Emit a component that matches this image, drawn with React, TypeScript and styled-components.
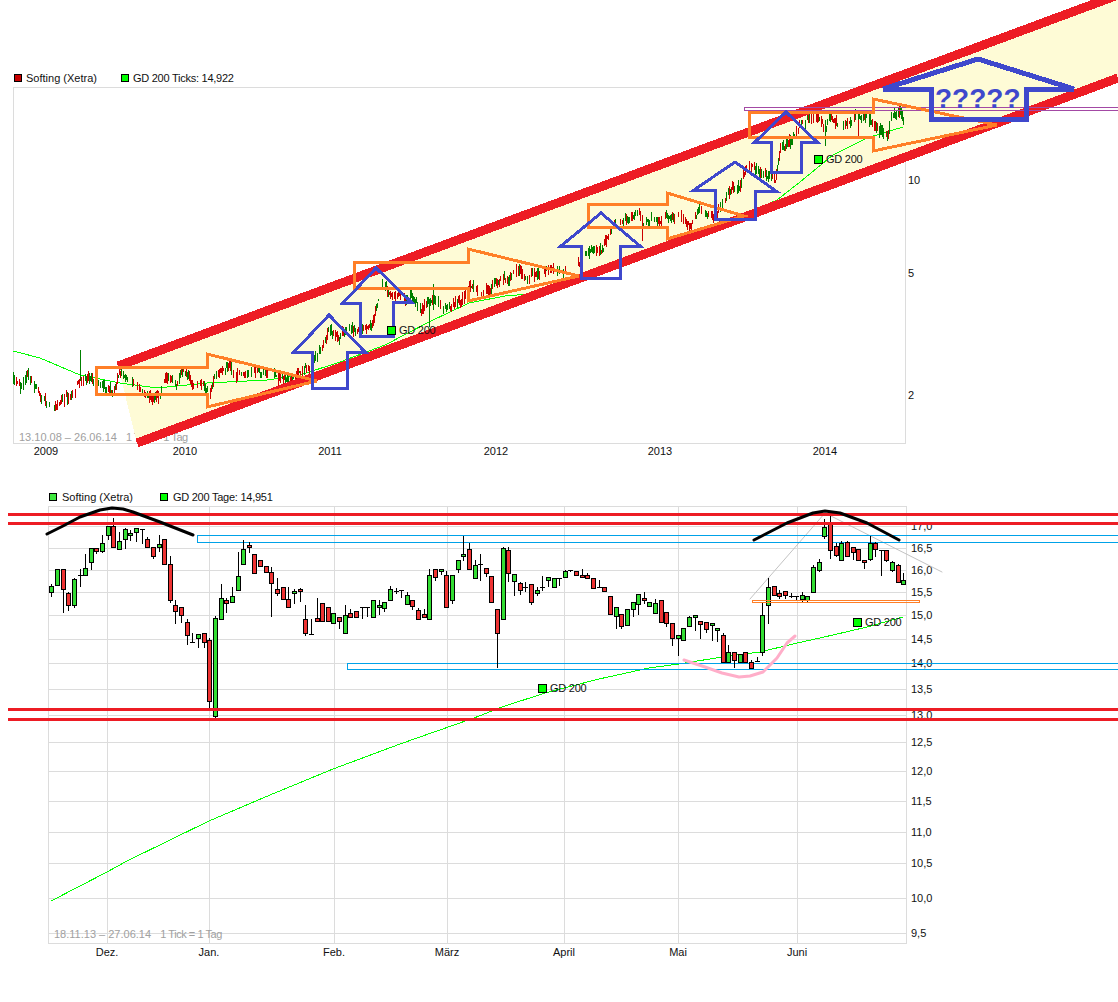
import styled, { createGlobalStyle } from "styled-components";

type Point = [number, number];
// top, bottom, wick top, wick bottom, direction (1 up, -1 down, 0 doji)
type Candle = [number, number, number, number, number];

const GlobalStyle = createGlobalStyle`
  body {
    margin: 0;
    background: #ffffff;
  }
`;

const Page = styled.div`
  width: 1118px;
  height: 1002px;
  padding-top: 71px;
  box-sizing: border-box;
  display: flex;
  flex-direction: column;
  overflow: hidden;
  font-family: "Liberation Sans", Arial, sans-serif;
`;

const Legend = styled.div<{ $inset: number; $top?: number; $gap: number }>`
  height: 14px;
  margin-top: ${(p) => p.$top ?? 0}px;
  padding-left: ${(p) => p.$inset}px;
  display: flex;
  align-items: center;
  gap: ${(p) => p.$gap}px;
  position: relative;
  z-index: 1;
`;

const LegendItem = styled.div<{ $gap: number; $tight?: boolean }>`
  display: flex;
  align-items: center;
  gap: ${(p) => p.$gap}px;
  font-size: 11px;
  color: #111111;
  white-space: nowrap;
  letter-spacing: ${(p) => (p.$tight ? "-0.25px" : "0")};
`;

const Swatch = styled.span<{ $color: string }>`
  width: 8px;
  height: 8px;
  box-sizing: border-box;
  border: 1px solid #000000;
  background: ${(p) => p.$color};
`;

const Plot = styled.svg`
  display: block;
  overflow: visible;
  flex: none;
`;

const GridLine = styled.line`
  stroke: #dcdcdc;
  stroke-width: 1;
  shape-rendering: crispEdges;
`;

const Frame = styled.rect`
  fill: none;
  stroke: #dcdcdc;
  stroke-width: 1;
  shape-rendering: crispEdges;
`;

const AxisLabel = styled.text<{ $center?: boolean }>`
  font-family: "Liberation Sans", Arial, sans-serif;
  font-size: 11px;
  fill: #111111;
  text-anchor: ${(p) => (p.$center ? "middle" : "start")};
`;

const MarkerLabel = styled(AxisLabel)`
  letter-spacing: -0.25px;
`;

const RangeLabel = styled.text`
  font-family: "Liberation Sans", Arial, sans-serif;
  font-size: 11px;
  fill: #a0a0a0;
  white-space: pre;
`;

const RangeTail = styled.tspan`
  letter-spacing: -0.45px;
`;

const MarkerBox = styled.rect`
  fill: #00ff00;
  stroke: #000000;
  stroke-width: 1;
  shape-rendering: crispEdges;
`;

const Channel = styled.polygon`
  fill: #fefbd6;
  shape-rendering: crispEdges;
`;

const ChannelEdge = styled.line`
  stroke: #ed1c24;
  stroke-width: 9;
  shape-rendering: crispEdges;
`;

const Average = styled.polyline`
  fill: none;
  stroke: #00ff00;
  stroke-width: 1;
  shape-rendering: crispEdges;
`;

const Bars = styled.path<{ $color: string }>`
  fill: none;
  stroke: ${(p) => p.$color};
  stroke-width: 1;
  shape-rendering: crispEdges;
`;

const OrangeArrow = styled.polygon`
  fill: none;
  stroke: #ff7f27;
  stroke-width: 3;
  shape-rendering: crispEdges;
`;

const BlueArrow = styled.polygon<{ $heavy?: boolean }>`
  fill: none;
  stroke: #3f48cc;
  stroke-width: ${(p) => (p.$heavy ? 5 : 3)};
  shape-rendering: crispEdges;
`;

const PurpleBand = styled.rect`
  fill: none;
  stroke: #a349a4;
  stroke-width: 1;
  shape-rendering: crispEdges;
`;

const Question = styled.text`
  font-family: "Liberation Sans", Arial, sans-serif;
  font-size: 28px;
  font-weight: 700;
  fill: #3f48cc;
`;

const Wick = styled.line`
  stroke: #000000;
  stroke-width: 1;
  shape-rendering: crispEdges;
`;

const Body = styled.rect<{ $up: boolean }>`
  fill: ${(p) => (p.$up ? "#33dd33" : "#ee3333")};
  stroke: #000000;
  stroke-width: 1;
  shape-rendering: crispEdges;
`;

const Level = styled.line`
  stroke: #ed1c24;
  stroke-width: 3;
  shape-rendering: crispEdges;
`;

const Zone = styled.rect<{ $color: string }>`
  fill: none;
  stroke: ${(p) => p.$color};
  stroke-width: 1;
  shape-rendering: crispEdges;
`;

const Sketch = styled.polyline<{ $color: string; $width: number }>`
  fill: none;
  stroke: ${(p) => p.$color};
  stroke-width: ${(p) => p.$width};
  stroke-linejoin: round;
  stroke-linecap: round;
`;

const TOP_TRACE: Point[] = [
  [13, 380], [20, 387], [27, 377], [33, 383], [40, 397], [53, 407], [63, 397], [73, 397], [80, 377],
  [90, 378], [100, 387], [113, 392], [120, 372], [133, 383], [150, 398], [160, 397], [165, 377],
  [177, 385], [183, 373], [197, 385], [210, 392], [217, 372], [230, 365], [240, 378], [253, 372],
  [273, 375], [290, 378], [307, 368], [317, 357], [328, 332], [340, 337], [347, 325], [363, 330],
  [372, 323], [382, 287], [395, 297], [414, 297], [419, 310], [432, 300], [449, 310], [462, 300],
  [470, 283], [482, 293], [495, 283], [509, 280], [517, 268], [527, 278], [542, 270], [554, 268],
  [562, 277], [579, 267], [587, 252], [602, 250], [609, 230], [619, 222], [639, 213], [642, 226],
  [649, 220], [660, 223], [662, 217], [682, 218], [689, 227], [699, 210], [709, 219], [723, 205],
  [733, 187], [740, 187], [748, 163], [763, 173], [775, 180], [780, 150], [790, 143], [797, 133],
  [807, 120], [818, 115], [825, 128], [830, 115], [840, 127], [855, 115], [870, 122], [887, 133],
  [890, 120], [897, 112], [903, 117],
];

const TOP_SPIKES: [number, number, number, string][] = [
  [80, 350, 380, "#008000"],
  [429, 300, 327, "#008000"],
  [433, 284, 310, "#008000"],
  [642, 215, 241, "#cc0000"],
  [825, 120, 146, "#008000"],
  [858, 112, 137, "#cc0000"],
];

const traceAt = (x: number) => {
  for (let i = 1; i < TOP_TRACE.length; i++) {
    const [x0, y0] = TOP_TRACE[i - 1];
    const [x1, y1] = TOP_TRACE[i];
    if (x <= x1) return y0 + ((y1 - y0) * (x - x0)) / (x1 - x0);
  }
  return TOP_TRACE[TOP_TRACE.length - 1][1];
};

const buildBars = () => {
  let seed = 41;
  const rnd = () => {
    seed = (seed * 16807) % 2147483647;
    return seed / 2147483647;
  };
  let red = "";
  let green = "";
  let drift = 0;
  let isGreen = true;
  for (let x = 13; x <= 903; x++) {
    if (x > 565 && x < 578) continue;
    drift = drift * 0.7 + (rnd() - 0.5) * 4.5;
    if (rnd() < 0.3) continue;
    if (rnd() < 0.35) isGreen = !isGreen;
    const mid = traceAt(x) + drift;
    const up = rnd() * 6 + 1;
    const down = rnd() * 6 + 1;
    const part = `M${x + 0.5} ${Math.round(mid - up)}V${Math.round(mid + down)}`;
    if (isGreen) green += part;
    else red += part;
  }
  TOP_SPIKES.forEach(([x, y1, y2, color]) => {
    const part = `M${x + 0.5} ${y1}V${y2}`;
    if (color === "#008000") green += part;
    else red += part;
  });
  return { red, green };
};

const topBars = buildBars();

const toPoints = (points: Point[]) => points.map((p) => p.join(",")).join(" ");

const TOP_AVERAGE: Point[] = [
  [13, 351], [40, 358], [80, 375], [120, 383], [157, 388], [207, 383], [267, 380], [300, 375], [340, 362],
  [385, 345], [429, 322], [469, 303], [505, 296], [529, 294],
];

const TOP_AVERAGE_END: Point[] = [[747, 213], [777, 200], [800, 182], [833, 155], [867, 138], [903, 127]];

const ORANGE_ARROWS: Point[][] = [
  [[96, 367], [207, 367], [207, 354], [317, 381], [207, 407], [207, 394], [96, 394]],
  [[354, 262], [468, 262], [468, 249], [579, 276], [468, 301], [468, 288], [354, 288]],
  [[588, 204], [667, 204], [667, 193], [744, 216], [667, 239], [667, 227], [588, 227]],
  [[749, 112], [873, 112], [873, 99], [997, 125], [873, 151], [873, 137], [749, 137]],
];

const BLUE_ARROWS: Point[][] = [
  [[329, 315], [365, 352], [347, 352], [347, 388], [312, 388], [312, 352], [294, 352]],
  [[376, 268], [411, 302], [393, 302], [393, 336], [360, 336], [360, 303], [343, 303]],
  [[601, 213], [640, 246], [620, 246], [620, 278], [581, 278], [581, 246], [561, 246]],
  [[735, 162], [776, 191], [755, 191], [755, 219], [715, 219], [715, 190], [694, 190]],
  [[786, 112], [817, 142], [801, 142], [801, 172], [771, 172], [771, 142], [755, 142]],
];

const BIG_ARROW: Point[] = [[978, 59], [1074, 89], [1026, 89], [1026, 119], [931, 119], [931, 89], [883, 89]];

const YEARS: [string, number][] = [
  ["2009", 46], ["2010", 185], ["2011", 330], ["2012", 496], ["2013", 660], ["2014", 825],
];

const MONTHS: [string, number][] = [
  ["Dez.", 107], ["Jan.", 209], ["Feb.", 334], ["März", 447], ["April", 564], ["Mai", 678], ["Juni", 797],
];

const PRICE_LINES: [string, number][] = [
  ["17,0", 526], ["16,5", 548], ["16,0", 570], ["15,5", 592], ["15,0", 615], ["14,5", 639], ["14,0", 663],
  ["13,5", 689], ["13,0", 715], ["12,5", 742], ["12,0", 771], ["11,5", 801], ["11,0", 832], ["10,5", 863],
  ["10,0", 898], ["9,5", 933],
];

const CANDLES: Candle[] = [
  [586, 592, 584, 597, 1], [569, 585, 569, 585, 1], [569, 589, 569, 613, -1], [593, 605, 592, 611, -1],
  [579, 605, 578, 608, 1], [575, 575, 569, 587, 0], [568, 575, 554, 575, 1], [548, 562, 548, 570, 1],
  [548, 551, 548, 554, -1], [543, 551, 535, 553, 1], [526, 535, 526, 540, 1], [526, 547, 518, 547, -1],
  [541, 549, 532, 549, 1], [529, 539, 528, 549, 1], [533, 535, 530, 541, 1], [528, 532, 528, 542, 1],
  [529, 529, 529, 544, 0], [539, 547, 537, 547, -1], [547, 556, 547, 559, -1], [544, 547, 535, 552, 1],
  [539, 564, 539, 564, -1], [564, 600, 556, 603, -1], [605, 611, 600, 624, -1], [607, 615, 607, 623, -1],
  [622, 635, 619, 645, -1], [642, 642, 633, 642, 0], [634, 638, 634, 648, 1], [633, 642, 633, 648, -1],
  [640, 701, 638, 708, -1], [618, 716, 616, 718, 1], [598, 619, 584, 619, 1], [600, 603, 598, 613, -1],
  [596, 602, 587, 603, 1], [576, 590, 552, 591, 1], [549, 564, 540, 564, 1], [545, 547, 542, 553, -1],
  [554, 573, 554, 573, -1], [560, 566, 560, 566, -1], [566, 572, 566, 572, -1], [572, 583, 567, 617, -1],
  [589, 593, 578, 596, -1], [587, 599, 587, 600, -1], [599, 607, 587, 607, -1], [591, 593, 589, 604, 1],
  [589, 591, 588, 602, -1], [619, 633, 605, 636, -1], [634, 634, 619, 634, 0], [618, 621, 598, 621, -1],
  [603, 621, 603, 621, -1], [607, 621, 607, 621, -1], [613, 623, 613, 623, 1], [617, 621, 617, 629, -1],
  [615, 633, 605, 633, 1], [613, 617, 609, 618, -1], [611, 617, 611, 617, -1], [607, 607, 607, 619, 0],
  [607, 607, 607, 617, 0], [600, 617, 600, 617, 1], [605, 607, 600, 615, 1], [602, 608, 602, 612, 1],
  [589, 600, 586, 600, 1], [591, 591, 588, 594, 0], [590, 590, 590, 598, 0], [595, 604, 592, 604, 1],
  [600, 606, 600, 610, -1], [610, 619, 608, 619, -1], [614, 617, 609, 617, -1], [575, 619, 569, 619, 1],
  [569, 577, 569, 581, -1], [569, 571, 569, 575, 1], [575, 607, 571, 607, -1], [575, 600, 575, 604, 1],
  [560, 569, 560, 573, 1], [554, 556, 536, 561, 1], [549, 569, 543, 569, -1], [565, 578, 560, 578, 1],
  [564, 564, 554, 581, 0], [568, 573, 568, 577, -1], [576, 602, 576, 602, -1], [609, 633, 609, 668, -1],
  [548, 619, 547, 619, 1], [550, 573, 547, 582, -1], [574, 581, 574, 596, 1], [583, 590, 582, 595, -1],
  [587, 587, 582, 592, 0], [584, 602, 584, 605, -1], [590, 593, 587, 596, 1], [587, 587, 576, 591, 0],
  [577, 580, 577, 587, 1], [578, 587, 578, 587, 1], [578, 578, 578, 586, 0], [571, 577, 570, 578, 1],
  [570, 570, 570, 572, 0], [571, 575, 571, 575, -1], [575, 577, 569, 577, -1], [575, 578, 573, 578, -1],
  [578, 588, 578, 588, -1], [587, 587, 580, 587, 0], [587, 591, 587, 591, -1], [596, 614, 596, 614, -1],
  [607, 616, 607, 629, 1], [614, 626, 614, 629, -1], [609, 625, 609, 625, 1], [602, 609, 602, 617, 1],
  [594, 604, 594, 615, 1], [598, 600, 592, 604, -1], [602, 606, 602, 606, 1], [603, 613, 599, 613, 1],
  [600, 622, 600, 623, -1], [612, 623, 612, 627, -1], [623, 638, 623, 646, -1], [635, 638, 635, 656, 1],
  [628, 640, 628, 640, 1], [617, 626, 616, 626, 1], [615, 617, 615, 631, 1], [621, 624, 621, 639, -1],
  [622, 629, 622, 633, -1], [623, 625, 623, 641, 1], [628, 630, 628, 642, 1], [635, 662, 633, 662, -1],
  [652, 662, 645, 662, 1], [652, 660, 652, 668, -1], [654, 662, 654, 662, 1], [652, 662, 652, 662, -1],
  [662, 668, 660, 669, -1], [661, 661, 657, 662, 0], [615, 652, 602, 656, 1], [587, 605, 578, 624, 1],
  [586, 595, 586, 595, -1], [593, 596, 590, 599, -1], [591, 595, 591, 599, -1], [596, 596, 593, 598, 0],
  [596, 596, 596, 600, 0], [595, 599, 592, 602, 1], [596, 600, 596, 602, 1], [567, 592, 565, 592, 1],
  [562, 570, 559, 572, 1], [527, 536, 519, 539, 1], [523, 550, 516, 559, -1], [546, 555, 543, 557, -1],
  [543, 560, 541, 560, 1], [542, 556, 541, 557, -1], [547, 552, 547, 560, -1], [549, 560, 549, 560, -1],
  [560, 562, 560, 569, -1], [543, 559, 536, 561, 1], [543, 549, 542, 557, -1], [550, 550, 550, 576, 0],
  [550, 560, 550, 562, -1], [562, 570, 561, 572, 1], [565, 582, 564, 582, -1], [580, 584, 573, 584, 1],
];

const LOWER_AVERAGE: Point[] = [
  [51, 901], [107, 872], [127, 861], [209, 821], [270, 795], [333, 769], [400, 744],
  [474, 718], [502, 707], [545, 693], [599, 679], [649, 668], [679, 664], [722, 657], [760, 652], [793, 644],
  [833, 635], [867, 627], [903, 617],
];

const LEFT_ARC: Point[] = [
  [47, 534], [63, 526], [80, 517], [100, 510], [112, 508], [123, 509], [133, 512], [160, 522], [193, 535],
];
const RIGHT_ARC: Point[] = [
  [754, 540], [787, 523], [813, 513], [825, 511], [840, 513], [867, 523], [899, 540],
];
const PINK_CURVE: Point[] = [
  [684, 660], [705, 667], [722, 673], [739, 677], [750, 676], [763, 672], [777, 658], [787, 643], [795, 636],
];
const TRIANGLE: Point[] = [[750, 599], [825, 513], [942, 572]];

const Marker = ({ x, y }: { x: number; y: number }) => (
  <>
    <MarkerBox x={x + 0.5} y={y + 0.5} width={8} height={8} />
    <MarkerLabel x={x + 12} y={y + 8}>
      GD 200
    </MarkerLabel>
  </>
);

const LongTermChart = () => (
  <Plot width={1118} height={400} viewBox="0 85 1118 400">
    <Frame x={13.5} y={87.5} width={892} height={356} />
    <RangeLabel x={19} y={441}>
      13.10.08 – 26.06.14   <RangeTail>1 Tick = 1 Tag</RangeTail>
    </RangeLabel>
    <AxisLabel x={908} y={184}>10</AxisLabel>
    <AxisLabel x={908} y={277}>5</AxisLabel>
    <AxisLabel x={908} y={399}>2</AxisLabel>
    {YEARS.map(([label, x]) => (
      <AxisLabel key={label} x={x} y={455} $center>
        {label}
      </AxisLabel>
    ))}
    <Channel points="118,366 1118,-5 1118,78 137,443" />
    <Average points={toPoints(TOP_AVERAGE)} />
    <Average points={toPoints(TOP_AVERAGE_END)} />
    <Bars $color="#cc0000" d={topBars.red} />
    <Bars $color="#008000" d={topBars.green} />
    <ChannelEdge x1={118} y1={366} x2={1118} y2={-5} />
    <ChannelEdge x1={137} y1={443} x2={1118} y2={78} />
    <PurpleBand x={744.5} y={107.5} width={380} height={3} />
    {ORANGE_ARROWS.map((arrow, i) => (
      <OrangeArrow key={i} points={toPoints(arrow)} />
    ))}
    {BLUE_ARROWS.map((arrow, i) => (
      <BlueArrow key={i} points={toPoints(arrow)} />
    ))}
    <BlueArrow $heavy points={toPoints(BIG_ARROW)} />
    <Question x={935} y={108}>?????</Question>
    <Marker x={387} y={326} />
    <Marker x={814} y={155} />
  </Plot>
);

const DailyChart = () => (
  <Plot width={1118} height={498} viewBox="0 504 1118 498">
    {PRICE_LINES.map(([label, y]) => (
      <GridLine key={label} x1={48} x2={907} y1={y + 0.5} y2={y + 0.5} />
    ))}
    {MONTHS.map(([label, x]) => (
      <GridLine key={label} x1={x + 0.5} x2={x + 0.5} y1={507} y2={944} />
    ))}
    <Frame x={48.5} y={506.5} width={858} height={437} />
    <RangeLabel x={54} y={938}>
      18.11.13 – 27.06.14   <RangeTail>1 Tick = 1 Tag</RangeTail>
    </RangeLabel>
    {PRICE_LINES.map(([label, y]) => (
      <AxisLabel key={label} x={911} y={y + 4}>
        {label}
      </AxisLabel>
    ))}
    {MONTHS.map(([label, x]) => (
      <AxisLabel key={label} x={x} y={956} $center>
        {label}
      </AxisLabel>
    ))}
    <Average points={toPoints(LOWER_AVERAGE)} />
    <Sketch $color="#c3c3c3" $width={1} points={toPoints(TRIANGLE)} />
    <Zone $color="#00a2e8" x={197.5} y={535.5} width={930} height={7} />
    <Zone $color="#00a2e8" x={347.5} y={663.5} width={780} height={6} />
    {CANDLES.map(([top, bottom, wickTop, wickBottom, dir], i) => {
      const x = Math.round(51.3 + 5.643 * i);
      return (
        <g key={i}>
          <Wick x1={x + 0.5} x2={x + 0.5} y1={wickTop} y2={wickBottom} />
          {dir === 0 ? (
            <Wick x1={x - 2} x2={x + 3} y1={top + 0.5} y2={top + 0.5} />
          ) : (
            <Body $up={dir > 0} x={x - 1.5} y={top + 0.5} width={4} height={bottom - top} />
          )}
        </g>
      );
    })}
    <Zone $color="#ff7f27" x={752.5} y={600.5} width={167} height={2} />
    <Level x1={8} x2={1118} y1={514.5} y2={514.5} />
    <Level x1={8} x2={1118} y1={523.5} y2={523.5} />
    <Level x1={8} x2={1118} y1={709.5} y2={709.5} />
    <Level x1={8} x2={1118} y1={719.5} y2={719.5} />
    <Sketch $color="#000000" $width={3} points={toPoints(LEFT_ARC)} />
    <Sketch $color="#000000" $width={3} points={toPoints(RIGHT_ARC)} />
    <Sketch $color="#ffaec9" $width={3} points={toPoints(PINK_CURVE)} />
    <Marker x={538} y={684} />
    <Marker x={853} y={618} />
  </Plot>
);

export default function App() {
  return (
    <>
      <GlobalStyle />
      <Page>
        <Legend $inset={14} $gap={24}>
          <LegendItem $gap={4}>
            <Swatch $color="#c80000" />
            Softing (Xetra)
          </LegendItem>
          <LegendItem $gap={4} $tight>
            <Swatch $color="#00ff00" />
            GD 200 Ticks: 14,922
          </LegendItem>
        </Legend>
        <LongTermChart />
        <Legend $inset={49} $top={5} $gap={27}>
          <LegendItem $gap={5}>
            <Swatch $color="#3fe83f" />
            Softing (Xetra)
          </LegendItem>
          <LegendItem $gap={5} $tight>
            <Swatch $color="#00ff00" />
            GD 200 Tage: 14,951
          </LegendItem>
        </Legend>
        <DailyChart />
      </Page>
    </>
  );
}
